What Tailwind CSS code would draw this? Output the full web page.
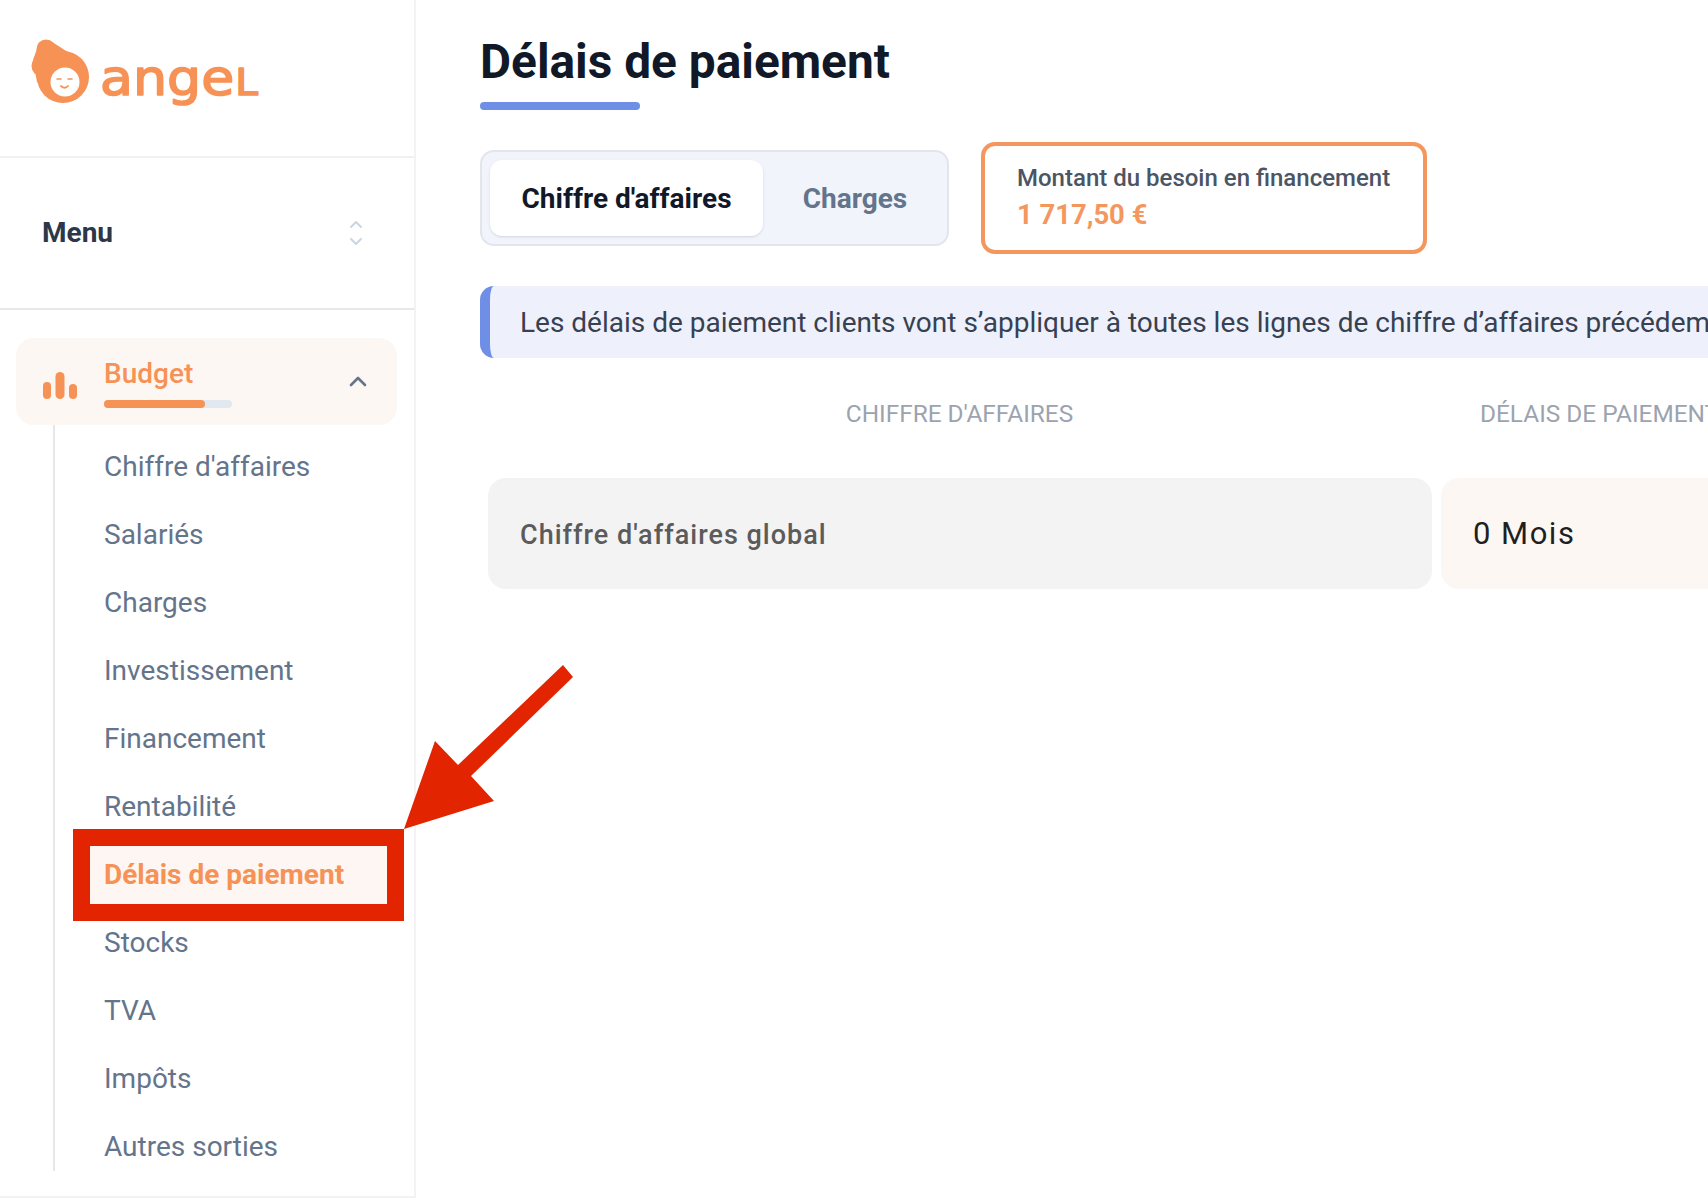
<!DOCTYPE html>
<html lang="fr">
<head>
    <meta charset="UTF-8">
    <meta name="viewport" content="width=device-width, initial-scale=1.0">
    <title>Délais de paiement</title>
    <script src="https://cdn.jsdelivr.net/npm/@tailwindcss/browser@4"></script>
</head>
<body class="bg-white font-['Roboto',sans-serif]">
    <div class="relative flex h-[1200px] w-[1708px] overflow-hidden">
        <!-- Sidebar -->
        <aside class="h-[1198px] w-[416px] shrink-0 border-r-2 border-b-2 border-[#f3f3f5]">
            <div class="h-[158px] border-b-2 border-[#f1f1f3]">
                <svg class="block" width="300" height="125" viewBox="0 0 300 125">
                    <g fill="#f79256">
                        <circle cx="46" cy="49" r="9.500"/>
                        <circle cx="42" cy="66" r="10.500"/>
                        <path d="M49 40 L82 61 L89 78 L63 103 L37 82 L33 60 L38 46 Z"/>
                        <circle cx="63" cy="77" r="26"/>
                    </g>
                    <circle cx="65" cy="82" r="14.5" fill="#fff"/>
                    <path d="M57 79h4M68 79h4" stroke="#f79256" stroke-width="1.6" stroke-linecap="round" fill="none"/>
                    <path d="M61 86q4 3.500 7 0" stroke="#f79256" stroke-width="1.8" stroke-linecap="round" fill="none"/>
                    <text x="100" y="95" font-family="'DejaVu Sans', sans-serif" font-size="49" fill="#f79256" stroke="#f79256" stroke-width="1.600" stroke-linejoin="round" textLength="158" lengthAdjust="spacingAndGlyphs">ange<tspan font-size="37" dx="1">L</tspan></text>
                </svg>
            </div>
            <div class="flex h-[152px] items-center justify-between border-b-2 border-[#e8e8ea] pr-[51px] pl-[42px]">
                <span class="text-[28px] font-bold text-[#2d3748]">Menu</span>
                <svg width="14" height="26" viewBox="0 0 14 26" fill="none" stroke="#cbd5e1" stroke-width="2" stroke-linecap="round" stroke-linejoin="round">
                    <path d="M2 7l5-5 5 5M2 19l5 5 5-5"/>
                </svg>
            </div>
            <div class="px-4 pt-[28px]">
                <div class="flex h-[87px] w-[381px] items-center rounded-[18px] bg-[#fdf7f3] pr-[30px] pl-[27px]">
                    <svg class="mt-[8px]" width="34" height="27" viewBox="0 0 34 27" fill="#f79256">
                        <rect x="0" y="10" width="8" height="17" rx="4"/>
                        <rect x="12.500" y="0" width="9" height="27" rx="4.500"/>
                        <rect x="26" y="12" width="8" height="15" rx="4"/>
                    </svg>
                    <div class="ml-[27px] flex-1">
                        <div class="mt-[3px] text-[28px] leading-[32px] font-medium text-[#f79256]">Budget</div>
                        <div class="mt-[10px] h-[8px] w-[128px] rounded-full bg-[#e2e8f0]">
                            <div class="h-full w-[101px] rounded-full bg-[#f79256]"></div>
                        </div>
                    </div>
                    <svg class="-mt-[2px]" width="18" height="12" viewBox="0 0 18 12" fill="none" stroke="#64748b" stroke-width="2.600" stroke-linecap="round" stroke-linejoin="round">
                        <path d="M2 10l7-7 7 7"/>
                    </svg>
                </div>
                <ul class="ml-[37px] h-[746px] border-l-2 border-[#e5e7eb] pt-[8px] pl-[49px] text-[28px] text-[#64748b]">
                    <li class="flex h-[68px] items-center">Chiffre d'affaires</li>
                    <li class="flex h-[68px] items-center">Salariés</li>
                    <li class="flex h-[68px] items-center">Charges</li>
                    <li class="flex h-[68px] items-center">Investissement</li>
                    <li class="flex h-[68px] items-center">Financement</li>
                    <li class="flex h-[68px] items-center">Rentabilité</li>
                    <li class="flex h-[68px] items-center">
                        <div class="-ml-[14px] flex h-[60px] w-[300px] items-center bg-[#fdf6f2] pl-[14px] font-bold text-[#f79256]">Délais de paiement</div>
                    </li>
                    <li class="flex h-[68px] items-center">Stocks</li>
                    <li class="flex h-[68px] items-center">TVA</li>
                    <li class="flex h-[68px] items-center">Impôts</li>
                    <li class="flex h-[68px] items-center">Autres sorties</li>
                </ul>
            </div>
        </aside>

        <!-- Main -->
        <main class="min-w-0 flex-1 pt-[33px] pl-[64px]">
            <h1 class="text-[47.8px] leading-[58px] font-bold text-[#111827]">Délais de paiement</h1>
            <div class="mt-[11px] h-[8px] w-[160px] rounded-full bg-[#6f8fe6]"></div>
            <div class="mt-[32px] flex items-center gap-[32px]">
                <div class="flex h-[96px] w-[469px] items-center rounded-[14px] border-2 border-[#e2e5ec] bg-[#f1f4fb] pl-[8px]">
                    <div class="flex h-[76px] w-[273px] items-center justify-center rounded-[12px] bg-white pt-[2px] text-[28px] font-bold text-[#111827] shadow-sm">Chiffre d'affaires</div>
                    <div class="flex-1 pt-[2px] text-center text-[28px] font-bold text-[#64748b]">Charges</div>
                </div>
                <div class="flex h-[112px] w-[446px] flex-col justify-center rounded-[14px] border-4 border-[#f4975f] pb-[3px] pl-[32px]">
                    <div class="text-[24px] leading-[32px] font-medium text-[#4b5563]">Montant du besoin en financement</div>
                    <div class="mt-[4px] text-[27.4px] leading-[34px] font-bold text-[#f4975f]">1 717,50 €</div>
                </div>
            </div>
            <div class="mt-[32px] flex h-[72px] items-center overflow-hidden rounded-l-[14px] border-l-[10px] border-[#6f8fe6] bg-[#eef1fb] pt-[2px] pl-[30px] whitespace-nowrap">
                <span class="text-[28px] text-[#374151]">Les délais de paiement clients vont s’appliquer à toutes les lignes de chiffre d’affaires précédemment saisies.</span>
            </div>
            <div class="mt-[38px] flex text-[24.4px] whitespace-nowrap text-[#9ca3af]">
                <div class="w-[951px] shrink-0 pl-[8px] text-center">CHIFFRE D'AFFAIRES</div>
                <div class="shrink-0 pl-[49px]">DÉLAIS DE PAIEMENT</div>
            </div>
            <div class="mt-[45px] flex gap-[9px] pl-[8px]">
                <div class="flex h-[111px] w-[944px] shrink-0 items-center rounded-[18px] bg-[#f3f3f3] pt-[4px] pl-[32px] text-[27px] font-medium tracking-[1px] text-[#5b5b5b]">Chiffre d'affaires global</div>
                <div class="flex h-[111px] flex-1 items-center rounded-l-[18px] bg-[#fdf7f3] pt-[2px] pl-[32px] text-[31px] tracking-[1.500px] text-[#1f1f1f]">0 Mois</div>
            </div>
        </main>

        <!-- Annotation over the screenshot -->
        <div class="absolute top-[829px] left-[73px] h-[92px] w-[331px] border-[17px] border-[#e32400]"></div>
        <svg class="absolute top-0 left-0" width="1708" height="1200" viewBox="0 0 1708 1200" fill="#e32400">
            <path d="M404 829 L435 741 L458 765 L563 665 L573 677 L471 776 L494 801 Z"/>
        </svg>
    </div>
</body>
</html>
